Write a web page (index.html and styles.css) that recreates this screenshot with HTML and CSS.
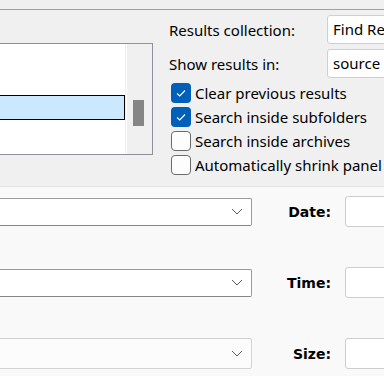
FILE: index.html
```html
<!DOCTYPE html>
<html lang="en">

<head>
    <meta charset="UTF-8">
    <meta name="viewport" content="width=device-width, initial-scale=1.0">
    <title>Find</title>
    <link rel="stylesheet" href="styles.css">
</head>

<body>
    <div class="strip"></div>
    <div class="top">
        <div class="list-box">
            <div class="list-items">
                <div class="list-row selected"></div>
            </div>
            <div class="scroll">
                <div class="thumb"></div>
            </div>
        </div>
        <div class="options">
            <div class="field-row">
                <span class="field-label">Results collection:</span>
                <div class="field-box">Find Results</div>
            </div>
            <div class="field-row">
                <span class="field-label">Show results in:</span>
                <div class="field-box">source</div>
            </div>
            <div class="checks">
                <label class="check-row"><span class="check on"><svg viewBox="0 0 20 20" width="20" height="20"><polyline points="6,10.5 8.8,13 14,7.5" fill="none" stroke="#fff" stroke-width="1.1"/></svg></span>Clear previous results</label>
                <label class="check-row"><span class="check on"><svg viewBox="0 0 20 20" width="20" height="20"><polyline points="6,10.5 8.8,13 14,7.5" fill="none" stroke="#fff" stroke-width="1.1"/></svg></span>Search inside subfolders</label>
                <label class="check-row"><span class="check"></span>Search inside archives</label>
                <label class="check-row"><span class="check"></span>Automatically shrink panel</label>
            </div>
        </div>
    </div>
    <div class="bottom">
        <div class="filter-row">
            <div class="combo"><svg class="chevron" viewBox="0 0 12 7" width="12" height="7"><polyline points="1,1 6,6 11,1" fill="none" stroke="#5c5c5c" stroke-width="1"/></svg></div>
            <span class="filter-label">Date:</span>
            <div class="filter-input"></div>
        </div>
        <div class="filter-row">
            <div class="combo"><svg class="chevron" viewBox="0 0 12 7" width="12" height="7"><polyline points="1,1 6,6 11,1" fill="none" stroke="#5c5c5c" stroke-width="1"/></svg></div>
            <span class="filter-label">Time:</span>
            <div class="filter-input"></div>
        </div>
        <div class="filter-row">
            <div class="combo dim"><svg class="chevron" viewBox="0 0 12 7" width="12" height="7"><polyline points="1,1 6,6 11,1" fill="none" stroke="#5c5c5c" stroke-width="1"/></svg></div>
            <span class="filter-label">Size:</span>
            <div class="filter-input"></div>
        </div>
    </div>
</body>

</html>
```

FILE: styles.css
```css
body {
    margin: 0;
    width: 384px;
    height: 376px;
    overflow: hidden;
    background-color: #f0f0f0;
    font-family: "Noto Sans", "Segoe UI", sans-serif;
    font-size: 15px;
    color: #000;
}

.strip {
    height: 9px;
}

.top {
    display: flex;
    height: 176px;
    border-top: 1px solid #a0a0a0;
    border-bottom: 1px solid #e2e2e2;
}

.list-box {
    display: flex;
    margin-top: 33px;
    margin-left: -20px;
    width: 171px;
    height: 110px;
    border: 1px solid #8f8f9d;
    background-color: #fff;
    flex-shrink: 0;
}

.list-items {
    flex: 1;
    padding-top: 51px;
    border-right: 1px solid #e6f0fb;
}

.list-row {
    height: 23px;
}

.list-row.selected {
    background-color: #cce8ff;
    border: 1px solid #000;
}

.scroll {
    width: 26px;
    background-color: #f0f0f0;
    border-left: 1px solid #fff;
    box-sizing: border-box;
    padding-top: 56px;
    padding-left: 6px;
}

.thumb {
    width: 11px;
    height: 26px;
    background-color: #858585;
}

.options {
    margin-left: 16px;
    padding-top: 5px;
    flex: 1;
}

.field-row {
    display: flex;
    align-items: center;
    margin-bottom: 5px;
}

.field-label {
    width: 158px;
    flex-shrink: 0;
}

.field-box {
    height: 27px;
    width: 120px;
    flex-shrink: 0;
    box-sizing: content-box;
    border: 1px solid #cfcfcf;
    border-radius: 3px;
    background-color: #fff;
    padding-left: 5px;
    line-height: 27px;
    white-space: nowrap;
}

.checks {
    margin-top: -2px;
}

.check-row {
    display: flex;
    align-items: center;
    height: 24px;
    white-space: nowrap;
}

.check {
    width: 20px;
    height: 20px;
    margin-left: 2px;
    margin-right: 4px;
    box-sizing: border-box;
    border: 1px solid #6b6b6b;
    border-radius: 4px;
    background-color: #fdfdfd;
    flex-shrink: 0;
}

.check.on {
    border: none;
    background-color: #005fb8;
}

.check svg {
    display: block;
}

.bottom {
    background-color: #f9f9f9;
    height: 189px;
    padding-top: 9px;
}

.filter-row {
    display: flex;
    align-items: center;
    height: 31px;
    margin-bottom: 40px;
}

.combo {
    position: relative;
    margin-left: -20px;
    width: 270px;
    height: 26px;
    flex-shrink: 0;
    border: 1px solid #9a9a9a;
    border-bottom-color: #868686;
    border-radius: 2px;
    background-color: #fff;
}

.combo.dim {
    height: 29px;
    border-color: #d2d2d2;
    background-color: #fcfcfc;
}

.chevron {
    position: absolute;
    right: 8px;
    top: 50%;
    margin-top: -4px;
}

.filter-label {
    width: 79px;
    text-align: right;
    font-family: "DejaVu Sans", sans-serif;
    font-weight: bold;
    font-size: 14px;
    flex-shrink: 0;
}

.filter-input {
    margin-left: 14px;
    width: 60px;
    height: 29px;
    flex-shrink: 0;
    border: 1px solid #cdcdcd;
    border-radius: 3px;
    background-color: #fff;
}
```
